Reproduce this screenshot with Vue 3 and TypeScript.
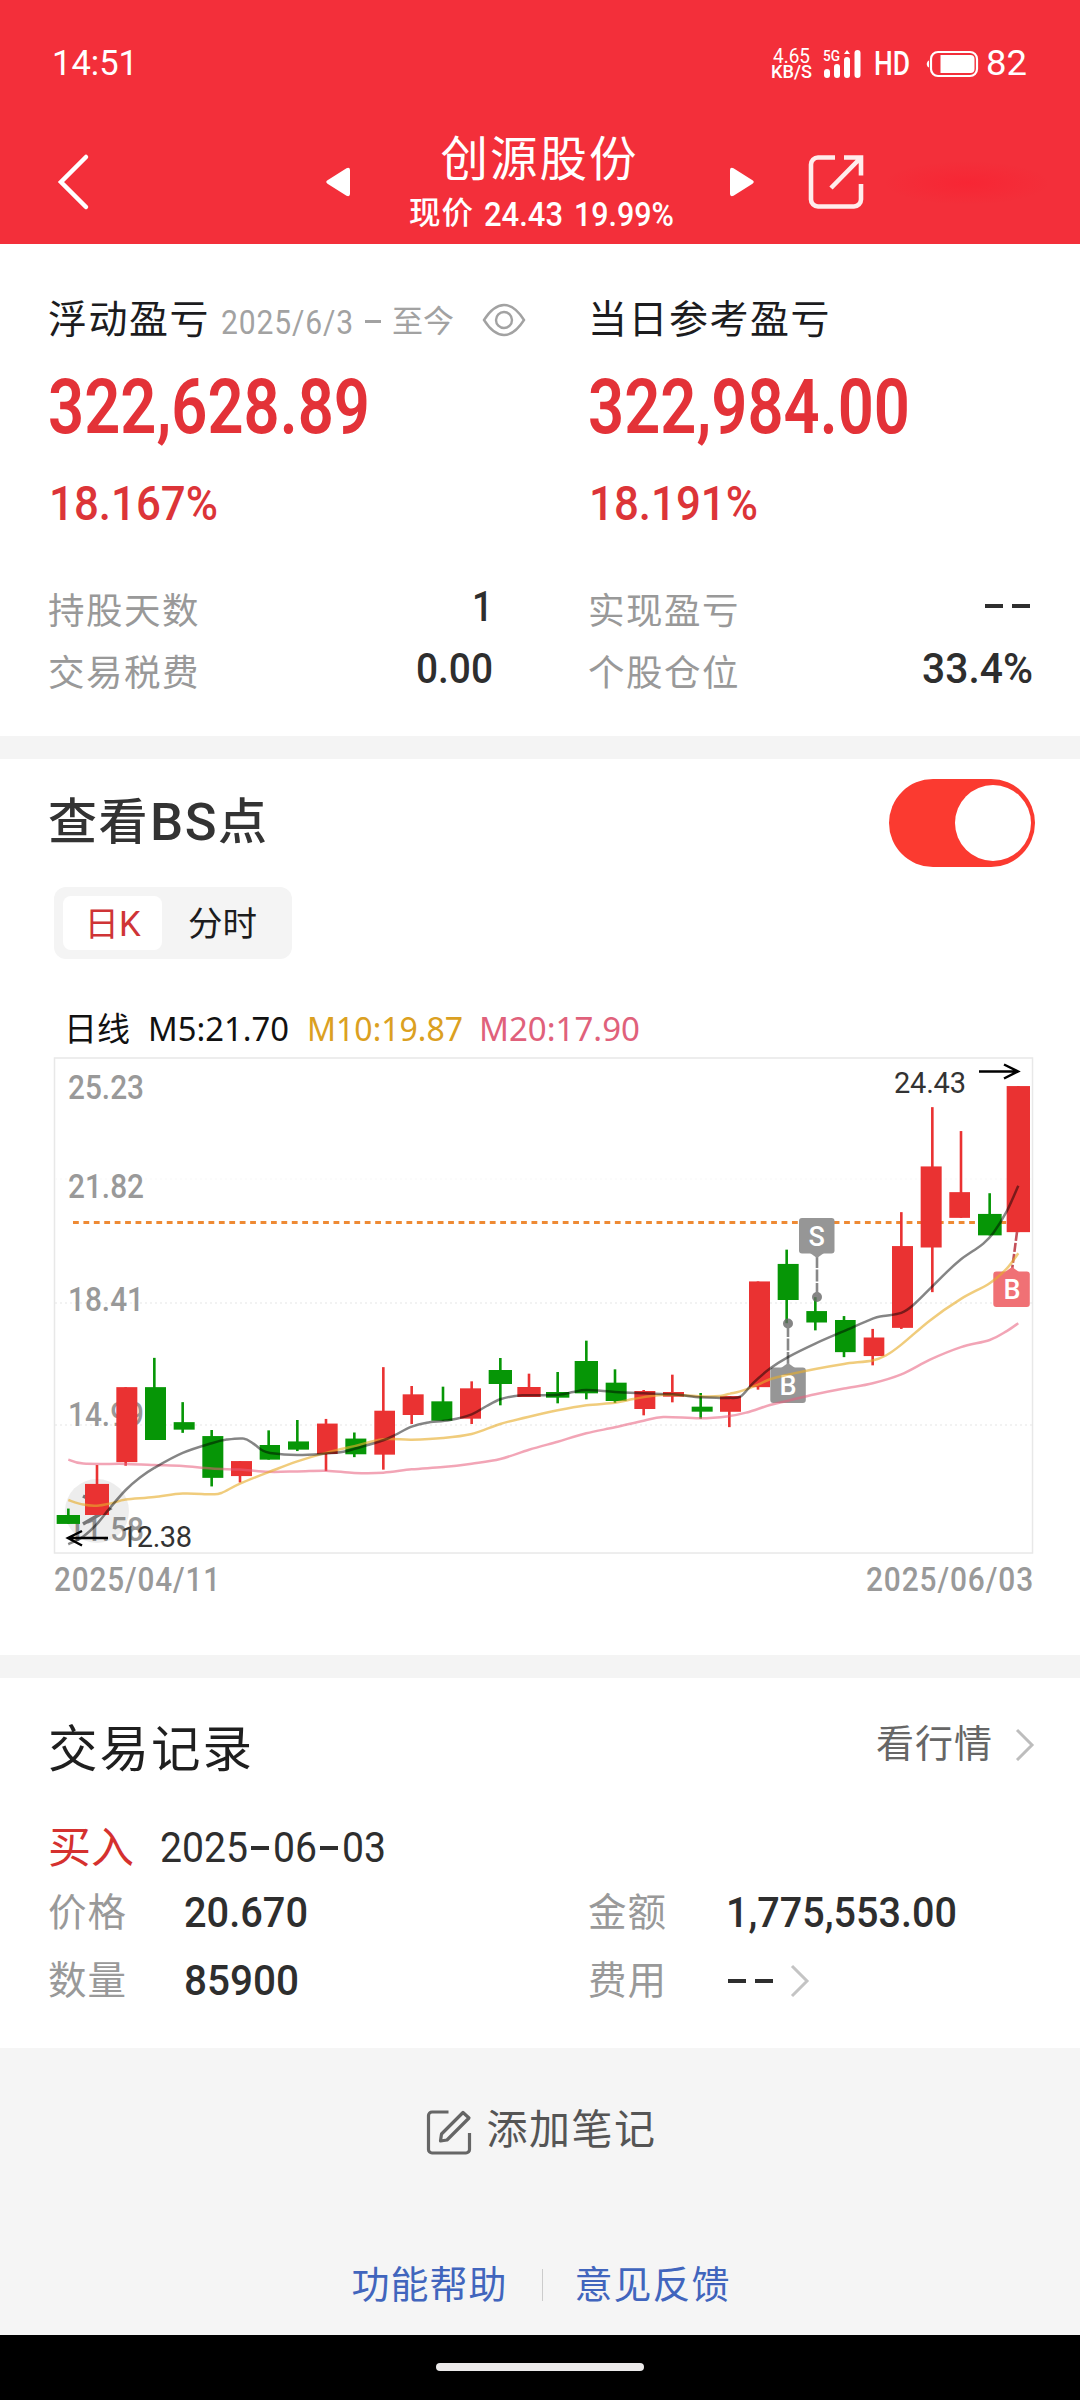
<script setup lang="ts">
type Direction = 'up' | 'down'
type Candle = [Direction, number, number, number, number, number, number, number]
type Point = [number, number]

interface Stat {
  label: string
  value: string
  width: number
}

interface Panel {
  title: string
  period?: string
  amount: string
  percent: string
  stats: Stat[]
}

const panels: Panel[] = [
  {
    title: '浮动盈亏',
    period: '2025/6/3',
    amount: '322,628.89',
    percent: '18.167%',
    stats: [
      { label: '持股天数', value: '1', width: 21 },
      { label: '交易税费', value: '0.00', width: 77 },
    ],
  },
  {
    title: '当日参考盈亏',
    amount: '322,984.00',
    percent: '18.191%',
    stats: [
      { label: '实现盈亏', value: '--', width: 0 },
      { label: '个股仓位', value: '33.4%', width: 111 },
    ],
  },
]

const axis = [
  { text: '25.23', y: 1099 },
  { text: '21.82', y: 1198 },
  { text: '18.41', y: 1311 },
  { text: '14.99', y: 1426 },
  { text: '11.58', y: 1541 },
]

/* Squeezes a run of digits to the given width, keeping its box in the flow. */
const vFit = {
  mounted(el: HTMLElement, binding: { value: number }) {
    const natural = el.getBoundingClientRect().width
    if (!binding.value || !natural) return
    el.style.transformOrigin = '0 50%'
    el.style.transform = `scaleX(${binding.value / natural})`
    el.style.marginRight = `${binding.value - natural}px`
  },
}

/* Chart data is kept in three windows of the plot, each with its own origin and scale. */
const plotters = [
  (x: number, y: number): Point => [40 + x / 3, 1040 + y / 2.8],
  (x: number, y: number): Point => [380 + x / 3, 1200 + y / 3],
  (x: number, y: number): Point => [720 + x / 3, 1040 + y / 2.8],
]

/* direction, left, right, body top, body bottom, wick x, wick top, wick bottom */
const candleData: Candle[][] = [
  [
    ['down', 50, 120, 1330, 1355, 85, 1312, 1355],
    ['up', 135, 207, 1243, 1330, 171, 1190, 1330],
    ['up', 229, 292, 972, 1182, 257, 972, 1192],
    ['down', 315, 378, 972, 1120, 343, 890, 1120],
    ['down', 401, 464, 1070, 1091, 428, 1014, 1100],
    ['down', 487, 550, 1109, 1226, 515, 1092, 1250],
    ['up', 573, 636, 1179, 1221, 600, 1179, 1239],
    ['down', 659, 720, 1134, 1175, 686, 1093, 1175],
    ['down', 744, 807, 1124, 1147, 772, 1064, 1151],
    ['up', 831, 893, 1074, 1159, 858, 1061, 1207],
    ['down', 916, 979, 1116, 1160, 943, 1099, 1168],
    ['up', 1003, 1065, 1038, 1161, 1030, 916, 1203],
  ],
  [
    ['up', 68, 131, 583, 645, 95, 558, 672],
    ['down', 154, 217, 604, 662, 189, 560, 662],
    ['up', 240, 303, 565, 656, 275, 544, 672],
    ['down', 326, 396, 510, 552, 361, 474, 616],
    ['up', 412, 482, 561, 591, 447, 521, 591],
    ['down', 498, 568, 576, 593, 533, 516, 610],
    ['down', 584, 654, 483, 580, 619, 422, 598],
    ['down', 677, 740, 548, 603, 705, 508, 609],
    ['up', 763, 826, 573, 627, 791, 570, 646],
    ['up', 849, 912, 576, 590, 877, 524, 607],
    ['down', 935, 998, 620, 635, 962, 579, 656],
  ],
  [
    ['up', 0, 63, 997, 1041, 28, 997, 1084],
    ['up', 87, 150, 676, 972, 114, 676, 979],
    ['down', 173, 236, 627, 728, 200, 587, 793],
    ['down', 259, 321, 759, 791, 286, 720, 813],
    ['down', 345, 407, 784, 874, 372, 773, 888],
    ['up', 431, 493, 833, 885, 458, 809, 911],
    ['up', 516, 579, 577, 806, 544, 482, 809],
    ['up', 602, 665, 354, 581, 637, 188, 706],
    ['up', 688, 750, 426, 498, 723, 255, 498],
    ['down', 774, 845, 487, 547, 809, 429, 547],
    ['up', 860, 930, 129, 538, 895, 129, 538],
  ],
]

const candles = candleData.flatMap((rows, i) =>
  rows.map(([dir, l, r, t, b, wx, wt, wb]) => {
    const [x, y] = plotters[i](l, t)
    const [x2, y2] = plotters[i](r, b)
    const [wickX, wickTop] = plotters[i](wx, wt)
    const wickBottom = plotters[i](wx, wb)[1]
    return { dir, x, y, w: x2 - x, h: y2 - y, wickX, wickTop, wickBottom }
  }),
)

/* Smooth path through the points of the three windows. */
function curve(parts: Point[][]): string {
  const p = parts.flatMap((pts, i) => pts.map(([x, y]) => plotters[i](x, y)))
  const f = (n: number) => n.toFixed(1)
  let d = `M${f(p[0][0])} ${f(p[0][1])}`
  for (let i = 0; i < p.length - 1; i++) {
    const a = p[Math.max(0, i - 1)]
    const b = p[i]
    const c = p[i + 1]
    const e = p[Math.min(p.length - 1, i + 2)]
    d += `C${f(b[0] + (c[0] - a[0]) / 6)} ${f(b[1] + (c[1] - a[1]) / 6)} ${f(c[0] - (e[0] - b[0]) / 6)} ${f(c[1] - (e[1] - b[1]) / 6)} ${f(c[0])} ${f(c[1])}`
  }
  return d
}

const ma5 = curve([
  [[85, 1412], [130, 1390], [171, 1355], [210, 1310], [257, 1260], [300, 1225], [343, 1198], [428, 1156], [515, 1129], [560, 1119], [610, 1116], [640, 1130], [665, 1148], [690, 1156], [772, 1162], [858, 1158], [910, 1153], [943, 1145]],
  [[10, 721], [45, 705], [95, 680], [140, 668], [210, 660], [275, 643], [320, 618], [361, 598], [410, 587], [447, 586], [533, 584], [580, 576], [619, 570], [705, 576], [791, 580], [877, 583], [962, 592]],
  [[0, 1002], [28, 1002], [62, 998], [100, 960], [150, 920], [204, 888], [286, 850], [372, 815], [458, 780], [490, 773], [544, 764], [580, 742], [637, 690], [680, 650], [723, 614], [760, 590], [790, 570], [820, 540], [860, 480], [895, 408]],
])
const ma10 = curve([
  [[85, 1288], [130, 1301], [171, 1304], [215, 1297], [257, 1287], [343, 1280], [428, 1270], [515, 1272], [545, 1268], [600, 1242], [686, 1210], [772, 1180], [858, 1156], [943, 1137]],
  [[10, 718], [95, 719], [189, 714], [275, 702], [361, 672], [447, 650], [533, 631], [619, 616], [705, 608], [760, 597], [820, 587], [877, 584], [962, 589], [1020, 588]],
  [[30, 990], [60, 984], [114, 965], [150, 950], [204, 937], [286, 921], [372, 907], [458, 897], [500, 882], [544, 853], [630, 785], [723, 725], [809, 681], [860, 640], [895, 597]],
])
const ma20 = curve([
  [[85, 1175], [130, 1186], [257, 1187], [343, 1190], [428, 1193], [515, 1200], [600, 1203], [686, 1209], [772, 1208], [858, 1206], [943, 1212]],
  [[10, 818], [95, 808], [189, 801], [275, 791], [361, 777], [447, 749], [533, 725], [619, 700], [705, 682], [791, 662], [850, 651], [962, 655]],
  [[28, 1053], [80, 1043], [150, 1022], [204, 1010], [286, 992], [372, 976], [458, 961], [544, 936], [630, 895], [723, 860], [809, 840], [860, 815], [895, 793]],
])
</script>

<template>
  <div class="screen">
    <header class="top">
      <div class="status">
        <span v-fit="86" class="clock">14:51</span>
        <div class="tray">
          <div class="net">
            <span v-fit="37">4.65</span>
            <span v-fit="41" class="unit">KB/S</span>
          </div>
          <svg class="signal" width="40" height="32" viewBox="0 0 40 32" fill="#fff">
            <text x="0" y="13" font-size="14" font-weight="500" textLength="17" lengthAdjust="spacingAndGlyphs">5G</text>
            <rect x="1" y="21" width="6" height="9" rx="3" />
            <rect x="11" y="16" width="6" height="14" rx="3" />
            <rect x="21" y="9" width="6" height="21" rx="3" />
            <path d="M24 2l3 4h-6z" />
            <rect x="31.500" y="2" width="6" height="28" rx="3" />
          </svg>
          <span v-fit="36" class="hd">HD</span>
          <svg class="battery" width="54" height="28" viewBox="0 0 54 28">
            <path d="M4 10.500v7c-3-1-3-6 0-7z" fill="#fff" />
            <rect x="6" y="2" width="46" height="24" rx="7" fill="none" stroke="#fff" stroke-width="2.200" />
            <path d="M15.500 5h30a4 4 0 0 1 4 4v10a4 4 0 0 1-4 4h-30z" fill="#fff" />
          </svg>
          <span v-fit="41" class="level">82</span>
        </div>
      </div>
      <div class="nav">
        <svg class="back" width="40" height="60" viewBox="0 0 40 60" fill="none" stroke="#fff" stroke-width="4.500" stroke-linecap="round">
          <path d="M32 5L7 30l25 25" />
        </svg>
        <svg class="prev" width="24" height="30" viewBox="0 0 24 30" fill="#fff">
          <path d="M1.500 13.300L20.500 1.200Q24 0 24 3v24q0 3-3.500 1.800L1.500 16.700q-2.500-1.700 0-3.400z" />
        </svg>
        <div class="stock">
          <h1>创源股份</h1>
          <p><span class="price">现价</span><span v-fit="79">24.43</span><span v-fit="100" class="change">19.99%</span></p>
        </div>
        <svg class="next" width="24" height="30" viewBox="0 0 24 30" fill="#fff">
          <path d="M22.500 13.300L3.500 1.200Q0 0 0 3v24q0 3 3.500 1.800l19-12.100q2.500-1.700 0-3.400z" />
        </svg>
        <svg class="share" width="58" height="58" viewBox="0 0 58 58" fill="none" stroke="#ffecec" stroke-width="4.600">
          <path d="M28 4.500H11a7 7 0 0 0-7 7v35a7 7 0 0 0 7 7h36a7 7 0 0 0 7-7V31" />
          <path d="M37 4.500h17v18M54 4.500L24 35" />
        </svg>
        <div class="smudge"></div>
      </div>
    </header>

    <section class="summary">
      <div v-for="panel in panels" :key="panel.title" class="panel">
        <div class="head">
          <h2>{{ panel.title }}</h2>
          <template v-if="panel.period">
            <span v-fit="133" class="period">{{ panel.period }}</span>
            <i class="dash light"></i>
            <span class="until">至今</span>
            <svg class="eye" width="44" height="34" viewBox="0 0 44 34" fill="none" stroke="#a2a2a2" stroke-width="2.400">
              <path d="M2 17C9 6 15 2 22 2s13 4 20 15c-7 11-13 15-20 15S9 28 2 17z" />
              <circle cx="22" cy="17" r="8" />
            </svg>
          </template>
        </div>
        <div class="amount"><span v-fit="322">{{ panel.amount }}</span></div>
        <div class="percent"><span v-fit="169">{{ panel.percent }}</span></div>
        <div v-for="stat in panel.stats" :key="stat.label" class="stat">
          <span class="label">{{ stat.label }}</span>
          <span v-if="stat.value === '--'" class="value none"><i class="dash"></i><i class="dash"></i></span>
          <span v-else class="value"><span v-fit="stat.width">{{ stat.value }}</span></span>
        </div>
      </div>
    </section>

    <section class="points">
      <div class="points-head">
        <h2>查看<span v-fit="68" class="bs">BS</span>点</h2>
        <div class="toggle"><i></i></div>
      </div>
      <div class="tabs">
        <span class="tab active">日K</span>
        <span class="tab">分时</span>
      </div>
      <div class="legend">
        <span class="kind">日线</span>
        <span v-fit="141" class="m5">M5:21.70</span>
        <span v-fit="156" class="m10">M10:19.87</span>
        <span v-fit="161" class="m20">M20:17.90</span>
      </div>
      <svg class="chart" width="1080" height="509" viewBox="0 1050 1080 509">
        <rect x="54.500" y="1058" width="978" height="495" fill="none" stroke="#e8e8e8" stroke-width="1.500" />
        <g stroke="#e6e6e6" stroke-width="1.200" stroke-dasharray="2 3">
          <path d="M55 1303H1032M55 1425H1032" />
          <path d="M55 1179H1032" stroke="#f7f7f7" />
        </g>
        <g class="axis">
          <text v-for="row in axis" :key="row.text" x="68" :y="row.y" textLength="76" lengthAdjust="spacingAndGlyphs">{{ row.text }}</text>
        </g>
        <path d="M73 1222.500H1008" stroke="#ee8a34" stroke-width="2.800" stroke-dasharray="5.800 4.620" />
        <circle cx="97" cy="1511" r="32" fill="#000" opacity="0.070" />
        <path d="M83 1496l26 13-26 15" fill="none" stroke="#777" stroke-width="3.500" />
        <g v-for="(c, i) in candles" :key="i" :class="c.dir">
          <rect :x="c.wickX - 1.3" :y="c.wickTop" width="2.600" :height="c.wickBottom - c.wickTop" />
          <rect :x="c.x" :y="c.y" :width="c.w" :height="c.h" />
        </g>
        <g fill="#666">
          <circle cx="817" cy="1297" r="5" opacity="0.800" />
          <circle cx="788" cy="1323.500" r="5" opacity="0.800" />
        </g>
        <g stroke="#888" stroke-width="2.600" stroke-dasharray="12 1.500">
          <path d="M817 1256V1297M788 1325V1366" />
          <path d="M1017 1232L1012 1270" stroke="#c4505a" stroke-dasharray="9 2" />
        </g>
        <g fill="#969696">
          <rect x="799" y="1218" width="35.500" height="35.500" rx="3" />
          <path d="M810 1253h14l-7 5z" />
          <rect x="770.300" y="1367.500" width="35.500" height="35.500" rx="3" />
          <path d="M781 1368h14l-7-5z" />
        </g>
        <g fill="#f07175">
          <rect x="993.300" y="1271.500" width="36.500" height="35.500" rx="3" />
          <path d="M1005 1272h14l-7-5z" />
        </g>
        <g class="flags">
          <text x="816.700" y="1245.500">S</text>
          <text x="788" y="1395">B</text>
          <text x="1012" y="1299">B</text>
        </g>
        <g fill="none" stroke-width="2.500">
          <path :d="ma20" stroke="#e85f7d" stroke-opacity="0.560" />
          <path :d="ma10" stroke="#e6ac2c" stroke-opacity="0.620" />
          <path :d="ma5" stroke="#000" stroke-opacity="0.480" />
        </g>
        <g fill="none" stroke="#000" stroke-width="2.500">
          <path d="M979 1071.400h38M1004 1064.500l14 6.900-14 7.100" />
          <path d="M108 1538H70M82 1531l-14 7 14 7.500" />
        </g>
        <g class="extremes">
          <text x="894" y="1093" textLength="72">24.43</text>
          <text x="121" y="1547" textLength="71">12.38</text>
        </g>
      </svg>
      <div class="range">
        <span v-fit="167">2025/04/11</span>
        <span v-fit="168">2025/06/03</span>
      </div>
    </section>

    <section class="records">
      <div class="records-head">
        <h2>交易记录</h2>
        <a class="more">
          看行情
          <svg width="20" height="34" viewBox="0 0 20 34" fill="none" stroke="#bdbdbd" stroke-width="3"><path d="M2 3l15 15L2 33" /></svg>
        </a>
      </div>
      <div class="deal">
        <span class="side">买入</span>
        <span v-fit="88" class="num">2025</span><i class="dash"></i>
        <span v-fit="44" class="num">06</span><i class="dash"></i>
        <span v-fit="44" class="num">03</span>
      </div>
      <div class="fields">
        <div class="field"><span class="key">价格</span><span v-fit="124" class="num strong">20.670</span></div>
        <div class="field"><span class="key">金额</span><span v-fit="231" class="num strong money">1,775,553.00</span></div>
        <div class="field"><span class="key">数量</span><span v-fit="115" class="num strong">85900</span></div>
        <div class="field">
          <span class="key">费用</span><i class="dash"></i><i class="dash"></i>
          <svg class="go" width="20" height="34" viewBox="0 0 20 34" fill="none" stroke="#c4c4c4" stroke-width="3"><path d="M2 2l15 15L2 32" /></svg>
        </div>
      </div>
    </section>

    <footer class="foot">
      <div class="note">
        <svg width="46" height="46" viewBox="0 0 46 46" fill="none" stroke="#666" stroke-width="3.200" stroke-linejoin="round">
          <path d="M22.500 3H6a3.500 3.500 0 0 0-3.500 3.500v34A3.500 3.500 0 0 0 6 44h34a3.500 3.500 0 0 0 3.500-3.500V24" />
          <path d="M37 3.500l6 5.500-22 22-6.500 1 1-7z" />
        </svg>
        <span>添加笔记</span>
      </div>
      <div class="links">
        <a>功能帮助</a>
        <i></i>
        <a>意见反馈</a>
      </div>
    </footer>
    <div class="homebar"><i></i></div>
  </div>
</template>

<style>
body {
  margin: 0;
  background: #fff;
}
</style>

<style scoped>
.screen {
  width: 1080px;
  height: 2400px;
  overflow: hidden;
  display: flex;
  flex-direction: column;
  background: #fff;
  font-family: Roboto, 'Noto Sans CJK SC', sans-serif;
  color: #222;
}
.screen * {
  box-sizing: border-box;
}
span,
a,
h1,
h2 {
  white-space: nowrap;
  flex: none;
}
h1,
h2,
p {
  margin: 0;
  font-weight: 400;
}
svg,
i {
  display: block;
  flex: none;
}
span {
  display: inline-block;
}

/* header */
.top {
  height: 244px;
  background: #f32f3a;
  color: #fff;
}
.status {
  height: 127px;
  padding: 0 53px 0 52px;
  display: flex;
  align-items: center;
  justify-content: space-between;
}
.clock,
.level {
  font-size: 35px;
  line-height: 40px;
}
.tray {
  display: flex;
  align-items: center;
}
.net {
  display: flex;
  flex-direction: column;
  align-items: center;
  font-size: 20px;
  line-height: 16px;
}
.net .unit {
  font-size: 18px;
  font-weight: 500;
}
.signal {
  margin-left: 11px;
}
.hd {
  margin-left: 11px;
  font-size: 33px;
  font-weight: 500;
}
.battery {
  margin-left: 15px;
}
.level {
  margin-left: 7px;
}
.nav {
  height: 117px;
  display: flex;
  padding-left: 54px;
}
.back {
  margin-top: 25px;
}
.prev {
  margin: 40px 0 0 232px;
}
.stock {
  width: 263px;
  margin-left: 60px;
  text-align: center;
}
.stock h1 {
  margin-top: 1px;
  height: 64px;
  line-height: 64px;
  font-size: 47.500px;
  letter-spacing: 2px;
  margin-left: -4px;
}
.stock p {
  display: flex;
  margin-left: -1px;
  font-size: 34px;
  font-weight: 500;
  line-height: 44px;
}
.stock p .price {
  font-size: 31.500px;
  letter-spacing: 1px;
  margin-right: 10px;
}
.stock p .change {
  margin-left: 11px;
}
.next {
  margin: 40px 0 0 57px;
}
.share {
  margin: 26px 0 0 53px;
}
.smudge {
  width: 168px;
  height: 44px;
  margin: 34px 0 0 18px;
  background: radial-gradient(ellipse at 50% 50%, rgba(255, 20, 40, 0.35), rgba(255, 20, 40, 0) 70%);
}

/* profit summary */
.summary {
  height: 492px;
  padding: 46px 0 0 48px;
  display: flex;
  gap: 95px;
}
.panel {
  width: 445px;
}
.head {
  height: 60px;
  display: flex;
  align-items: center;
  color: #a2a2a2;
}
.head h2 {
  font-size: 39px;
  letter-spacing: 1.500px;
  line-height: 62px;
  color: #1c1c1e;
}
.period {
  margin-left: 11px;
  font-size: 34px;
  line-height: 40px;
  letter-spacing: 1px;
  padding-top: 3px;
}
.dash {
  width: 18px;
  height: 4px;
  background: #2e2e2e;
}
.dash.light {
  width: 16px;
  height: 3px;
  margin: 3px 0 0 11px;
  background: #a2a2a2;
}
.until {
  margin-left: 11px;
  font-size: 31px;
  line-height: 40px;
  padding-top: 3px;
}
.eye {
  margin-left: 28px;
}
.amount {
  margin-top: 17px;
  height: 80px;
  line-height: 80px;
  font-size: 76px;
  font-weight: 600;
  color: #e33238;
}
.percent {
  margin-top: 32px;
  margin-bottom: 52px;
  padding-left: 1px;
  height: 50px;
  line-height: 50px;
  font-size: 49px;
  font-weight: 500;
  color: #dc3438;
}
.stat {
  height: 62px;
  display: flex;
  align-items: center;
  justify-content: space-between;
}
.label {
  font-size: 36.500px;
  line-height: 40px;
  letter-spacing: 1.500px;
  color: #999;
}
.value {
  padding-bottom: 12px;
  font-size: 43px;
  font-weight: 500;
  color: #2e2e2e;
}
.value.none {
  display: flex;
  gap: 9px;
  padding: 0 3px 12px 0;
}

/* buy and sell points */
.points {
  height: 919px;
  border-top: 23px solid #f4f4f4;
  padding-top: 20px;
}
.points-head {
  height: 88px;
  padding: 0 45px 0 48px;
  display: flex;
  align-items: center;
  justify-content: space-between;
}
.points-head h2 {
  display: flex;
  font-size: 49px;
  line-height: 88px;
  font-weight: 500;
  letter-spacing: 1.500px;
  color: #333;
}
.bs {
  font-size: 52px;
  margin-left: 1px;
}
.toggle {
  width: 146px;
  height: 88px;
  border-radius: 44px;
  background: #fb3a30;
  display: flex;
  align-items: center;
  justify-content: flex-end;
  padding-right: 4px;
}
.toggle i {
  width: 76px;
  height: 76px;
  border-radius: 50%;
  background: #fff;
}
.tabs {
  width: 238px;
  height: 72px;
  margin: 20px 0 0 54px;
  padding: 9px;
  border-radius: 12px;
  background: #f4f4f4;
  display: flex;
}
.tab {
  width: 121px;
  line-height: 56px;
  text-align: center;
  font-size: 34.500px;
  color: #1c1c1e;
}
.tab.active {
  width: 99px;
  height: 54px;
  border-radius: 8px;
  background: #fff;
  color: #cf3436;
}
.legend {
  height: 40px;
  margin-top: 50px;
  padding-left: 64px;
  display: flex;
  align-items: center;
  font-family: 'Noto Sans', 'Noto Sans CJK SC', sans-serif;
  font-size: 33px;
  line-height: 40px;
  color: #111;
}
.kind {
  font-size: 33px;
}
.m5 {
  margin-left: 18px;
}
.m10 {
  margin-left: 18px;
  color: #dba021;
}
.m20 {
  margin-left: 16px;
  color: #e0617b;
}
.chart {
  margin-top: 1px;
}
.axis {
  font-size: 33px;
  font-weight: 500;
  fill: #999;
}
.up {
  fill: #ea3232;
}
.down {
  fill: #069606;
}
.flags {
  font-size: 27px;
  font-weight: 500;
  fill: #fff;
  text-anchor: middle;
}
.extremes {
  font-size: 29px;
  fill: #333;
}
.range {
  height: 40px;
  padding: 0 46px 0 54px;
  display: flex;
  align-items: center;
  justify-content: space-between;
  font-size: 33.500px;
  letter-spacing: 1px;
  font-weight: 500;
  color: #999;
}

/* trade records */
.records {
  height: 393px;
  border-top: 23px solid #f4f4f4;
  padding: 42px 0 0 48px;
}
.records-head {
  height: 60px;
  padding-right: 45px;
  display: flex;
  align-items: center;
  justify-content: space-between;
}
.records-head h2 {
  font-size: 49.500px;
  line-height: 60px;
  letter-spacing: 2px;
  font-weight: 400;
  color: #1f1f1f;
}
.more {
  display: flex;
  align-items: center;
  gap: 22px;
  padding-bottom: 12px;
  font-size: 38px;
  line-height: 40px;
  letter-spacing: 1px;
  color: #666;
}
.deal {
  height: 56px;
  margin-top: 40px;
  display: flex;
  align-items: center;
}
.deal .dash {
  margin: 0 4px 0 3px;
}
.side {
  width: 112px;
  font-size: 43px;
  line-height: 54px;
  color: #d5312f;
}
.num {
  font-size: 42px;
  line-height: 50px;
  font-weight: 400;
  color: #2e2e2e;
}
.num.strong {
  font-weight: 500;
}
.num.money {
  margin-left: 2px;
}
.fields {
  margin-top: 4px;
  display: grid;
  grid-template-columns: 540px 1fr;
}
.field {
  height: 68px;
  display: flex;
  align-items: center;
  padding-bottom: 2px;
}
.key {
  width: 136px;
  font-size: 38.500px;
  line-height: 44px;
  letter-spacing: 1px;
  color: #999;
}
.field .dash {
  margin-left: 4px;
}
.field .dash + .dash {
  margin-left: 9px;
}
.go {
  margin-left: 17px;
}

/* footer */
.foot {
  height: 287px;
  padding-top: 52px;
  background: #f5f5f5;
}
.note {
  height: 60px;
  padding-left: 2px;
  display: flex;
  justify-content: center;
  align-items: center;
  gap: 15px;
  font-size: 41px;
  line-height: 60px;
  letter-spacing: 1.500px;
  color: #555;
}
.note svg {
  margin-top: 4px;
}
.links {
  height: 40px;
  margin-top: 105px;
  padding-left: 2px;
  display: flex;
  justify-content: center;
  align-items: center;
  gap: 34px;
  font-size: 38px;
  letter-spacing: 1px;
  line-height: 42px;
  color: #4165bd;
}
.links i {
  width: 1px;
  height: 32px;
  margin-right: -2px;
  background: #ccc;
}
.homebar {
  height: 65px;
  padding-top: 28px;
  background: #000;
}
.homebar i {
  width: 208px;
  height: 8px;
  margin: 0 auto;
  border-radius: 4px;
  background: #eceaea;
}
</style>
